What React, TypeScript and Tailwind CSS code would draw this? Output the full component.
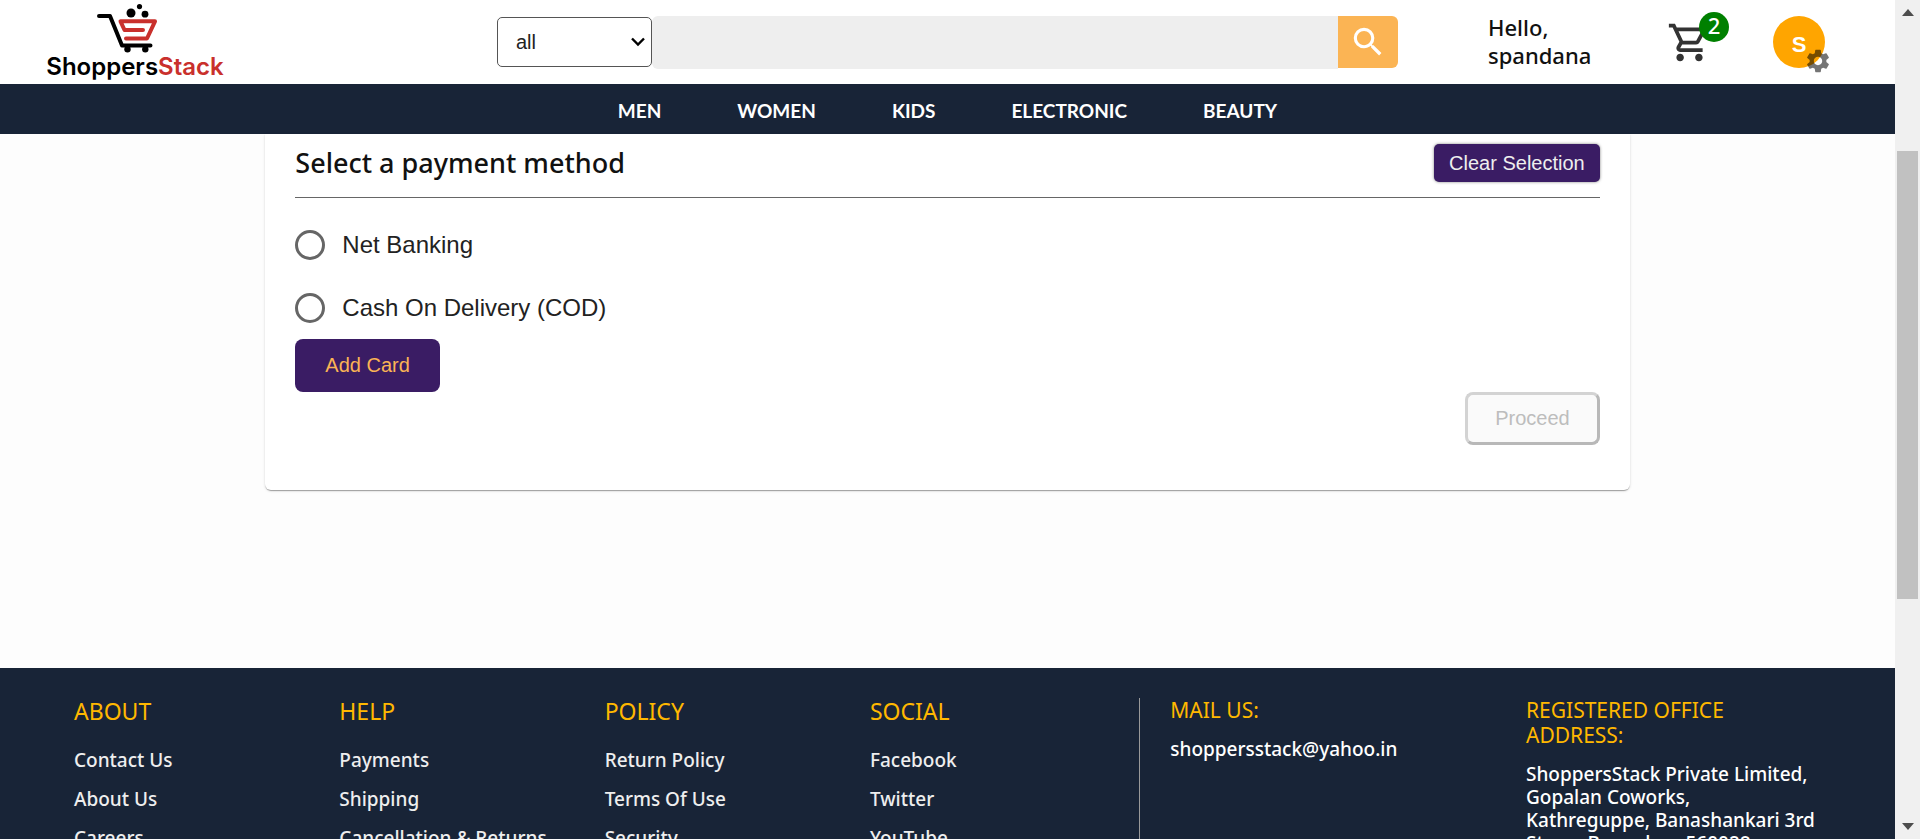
import { MdOutlineShoppingCart, MdSearch, MdSettings } from "react-icons/md";

const navItems = ["MEN", "WOMEN", "KIDS", "ELECTRONIC", "BEAUTY"];

const footerColumns = [
  { title: "ABOUT", links: ["Contact Us", "About Us", "Careers"] },
  { title: "HELP", links: ["Payments", "Shipping", "Cancellation & Returns"] },
  { title: "POLICY", links: ["Return Policy", "Terms Of Use", "Security"] },
  { title: "SOCIAL", links: ["Facebook", "Twitter", "YouTube"] },
];

const paymentMethods = [
  { id: "net-banking", label: "Net Banking" },
  { id: "cod", label: "Cash On Delivery (COD)" },
];

function Logo() {
  return (
    <a href="#" className="flex w-44 shrink-0 flex-col items-center">
      <svg viewBox="0 0 60 50" className="mr-4 h-[50px] w-[60px]" fill="none" strokeLinecap="round" strokeLinejoin="round">
        <path d="M2 12H13L25 41.500H53.500" stroke="#000" strokeWidth="4" />
        <circle cx="34" cy="9" r="4.500" fill="#000" />
        <circle cx="42.500" cy="2.600" r="2.600" fill="#000" />
        <circle cx="48" cy="10.200" r="3.400" fill="#000" />
        <circle cx="30.500" cy="45.300" r="3.200" fill="#000" />
        <circle cx="48.300" cy="45.300" r="3.200" fill="#000" />
        <path d="M46 26H27.500L23.500 17.300H58L50 34.500H29" stroke="#c9302c" strokeWidth="4" />
      </svg>
      <span className="font-['Inter',sans-serif] text-[24px] leading-[26px] font-semibold text-black">
        Shoppers<span className="text-[#c9302c]">Stack</span>
      </span>
    </a>
  );
}

function Header() {
  return (
    <header className="flex h-[84px] shrink-0 items-center bg-white pr-[70px] pl-[47px]">
      <Logo />
      <form className="ml-[274px] flex flex-1 items-center" onSubmit={(e) => e.preventDefault()}>
        <div className="relative">
          <select
            aria-label="Category"
            className="h-[50px] w-[155px] appearance-none rounded-[5px] border border-[#555] bg-white pl-[18px] font-['Liberation_Sans',sans-serif] text-xl text-[#222]"
          >
            <option>all</option>
          </select>
          <svg
            viewBox="0 0 14 10"
            className="pointer-events-none absolute top-5 right-[7px] h-[10px] w-[14px]"
            fill="none"
            stroke="#000"
            strokeWidth="2.400"
          >
            <path d="M1 1.500L7 7.500L13 1.500" />
          </svg>
        </div>
        <input
          type="text"
          aria-label="Search"
          className="h-[53px] min-w-0 flex-1 rounded-l-md bg-[#eee] px-4 font-['Liberation_Sans',sans-serif] text-xl outline-none"
        />
        <button
          type="submit"
          aria-label="Submit search"
          className="flex h-[52px] w-[60px] items-center justify-center rounded-r-md bg-[#fbb454] text-white"
        >
          <MdSearch size={38} />
        </button>
      </form>
      <p className="ml-[90px] w-[140px] pb-[2px] font-['Noto_Sans',sans-serif] text-[22px] leading-7 font-medium text-[#111]">
        Hello, spandana
      </p>
      <a href="#" aria-label="Cart" className="relative ml-[39px] text-[#333]">
        <MdOutlineShoppingCart size={45} />
        <span className="absolute -top-2 left-8 flex size-[30px] items-center justify-center rounded-full bg-[#008000] pb-1 font-['Noto_Sans',sans-serif] text-[22px] leading-7 font-medium text-white">
          2
        </span>
      </a>
      <button
        type="button"
        aria-label="Account settings"
        className="relative ml-[61px] flex size-[52px] items-center justify-center rounded-full bg-[#ffa500] pt-1 font-['Liberation_Sans',sans-serif] text-[22px] font-bold text-white"
      >
        S
        <MdSettings size={28} className="absolute top-[31px] left-[31px] text-black/54" />
      </button>
    </header>
  );
}

function PaymentCard() {
  return (
    <section className="mx-auto w-[72%] rounded-b-md bg-white px-[30px] pt-[10px] pb-[45px] shadow-[0_2px_1px_-1px_rgba(0,0,0,0.2),0_1px_1px_rgba(0,0,0,0.14),0_1px_3px_rgba(0,0,0,0.12)]">
      <div className="flex items-start justify-between border-b border-[#666] pb-[15px]">
        <h1 className="font-['Noto_Sans',sans-serif] text-[27px] leading-[38px] font-medium text-[#111]">
          Select a payment method
        </h1>
        <button
          type="button"
          className="h-[38px] rounded-[5px] bg-[#3a1c64] px-[15px] text-xl text-[#eee] shadow-[0_0_3px_rgba(0,0,0,0.5)]"
        >
          Clear Selection
        </button>
      </div>
      <div className="flex flex-col pt-[15px]">
        {paymentMethods.map((method) => (
          <label key={method.id} htmlFor={method.id} className="flex h-[63px] items-center gap-[17px] text-2xl text-[#222]">
            <input
              id={method.id}
              type="radio"
              name="payment"
              className="size-[30px] appearance-none rounded-full border-[3px] border-[#666] checked:bg-[#3a1c64]"
            />
            {method.label}
          </label>
        ))}
      </div>
      <button type="button" className="block h-[53px] rounded-lg bg-[#3a1c64] px-[30px] pb-[2px] text-xl text-[#fbb454]">
        Add Card
      </button>
      <div className="flex justify-end">
        <button
          type="button"
          disabled
          className="h-[53px] rounded-lg border-[3px] border-t-[#d3d3d3] border-r-[#b8b8b8] border-b-[#b8b8b8] border-l-[#d3d3d3] bg-[#fafafa] px-[27px] pb-[2px] text-xl text-[#bdbdbd]"
        >
          Proceed
        </button>
      </div>
    </section>
  );
}

function Footer() {
  return (
    <footer className="flex shrink-0 bg-[#182437] pt-[30px] pl-[74px] font-['Noto_Sans',sans-serif]">
      {footerColumns.map((column) => (
        <div key={column.title} className="w-[14.570%]">
          <h2 className="text-[23px] leading-[26px] text-[#ffb800]">{column.title}</h2>
          <ul className="flex flex-col gap-[10px] pt-[22px]">
            {column.links.map((link) => (
              <li key={link} className="leading-7">
                <a href="#" className="text-[19px] leading-7 font-medium text-[#eee]">
                  {link}
                </a>
              </li>
            ))}
          </ul>
        </div>
      ))}
      <div className="ml-1 flex-1 border-l border-[#999] pl-[30px]">
        <h2 className="text-[21px] leading-[25px] text-[#ffb800]">MAIL US:</h2>
        <p className="pt-[14px] text-[19px] leading-[25px] font-medium text-white">shoppersstack@yahoo.in</p>
      </div>
      <div className="w-[369px] pr-14">
        <h2 className="w-[240px] text-[21px] leading-[25px] text-[#ffb800]">REGISTERED OFFICE ADDRESS:</h2>
        <address className="pt-[15px] text-[19px] leading-[23px] font-medium whitespace-nowrap text-white not-italic">
          ShoppersStack Private Limited,
          <br />
          Gopalan Coworks,
          <br />
          Kathreguppe, Banashankari 3rd
          <br />
          Stage, Bangalore 560028
        </address>
      </div>
    </footer>
  );
}

function ScrollRail() {
  return (
    <div aria-hidden="true" className="flex w-[25px] shrink-0 flex-col items-center bg-[#f0f0f0] py-[9px]">
      <svg viewBox="0 0 12 7" className="h-[7px] w-3" fill="#4d4d4d">
        <path d="M6 0L12 7H0Z" />
      </svg>
      <div className="mt-[135px] h-[448px] w-[21px] bg-[#c1c1c1]" />
      <svg viewBox="0 0 12 7" className="mt-auto h-[7px] w-3" fill="#4d4d4d">
        <path d="M6 7L12 0H0Z" />
      </svg>
    </div>
  );
}

export default function App() {
  return (
    <div className="flex h-screen overflow-hidden bg-[#fdfdfd] font-['Liberation_Sans',Arial,sans-serif]">
      <div className="flex min-w-0 flex-1 flex-col overflow-hidden">
        <Header />
        <nav className="flex h-[50px] shrink-0 items-center justify-center gap-[76px] bg-[#182437] pt-[3px] font-['Lato',sans-serif] text-[19px] leading-6 font-bold text-white">
          {navItems.map((item) => (
            <a key={item} href="#">
              {item}
            </a>
          ))}
        </nav>
        <main className="shrink-0 pb-[178px]">
          <PaymentCard />
        </main>
        <Footer />
      </div>
      <ScrollRail />
    </div>
  );
}
